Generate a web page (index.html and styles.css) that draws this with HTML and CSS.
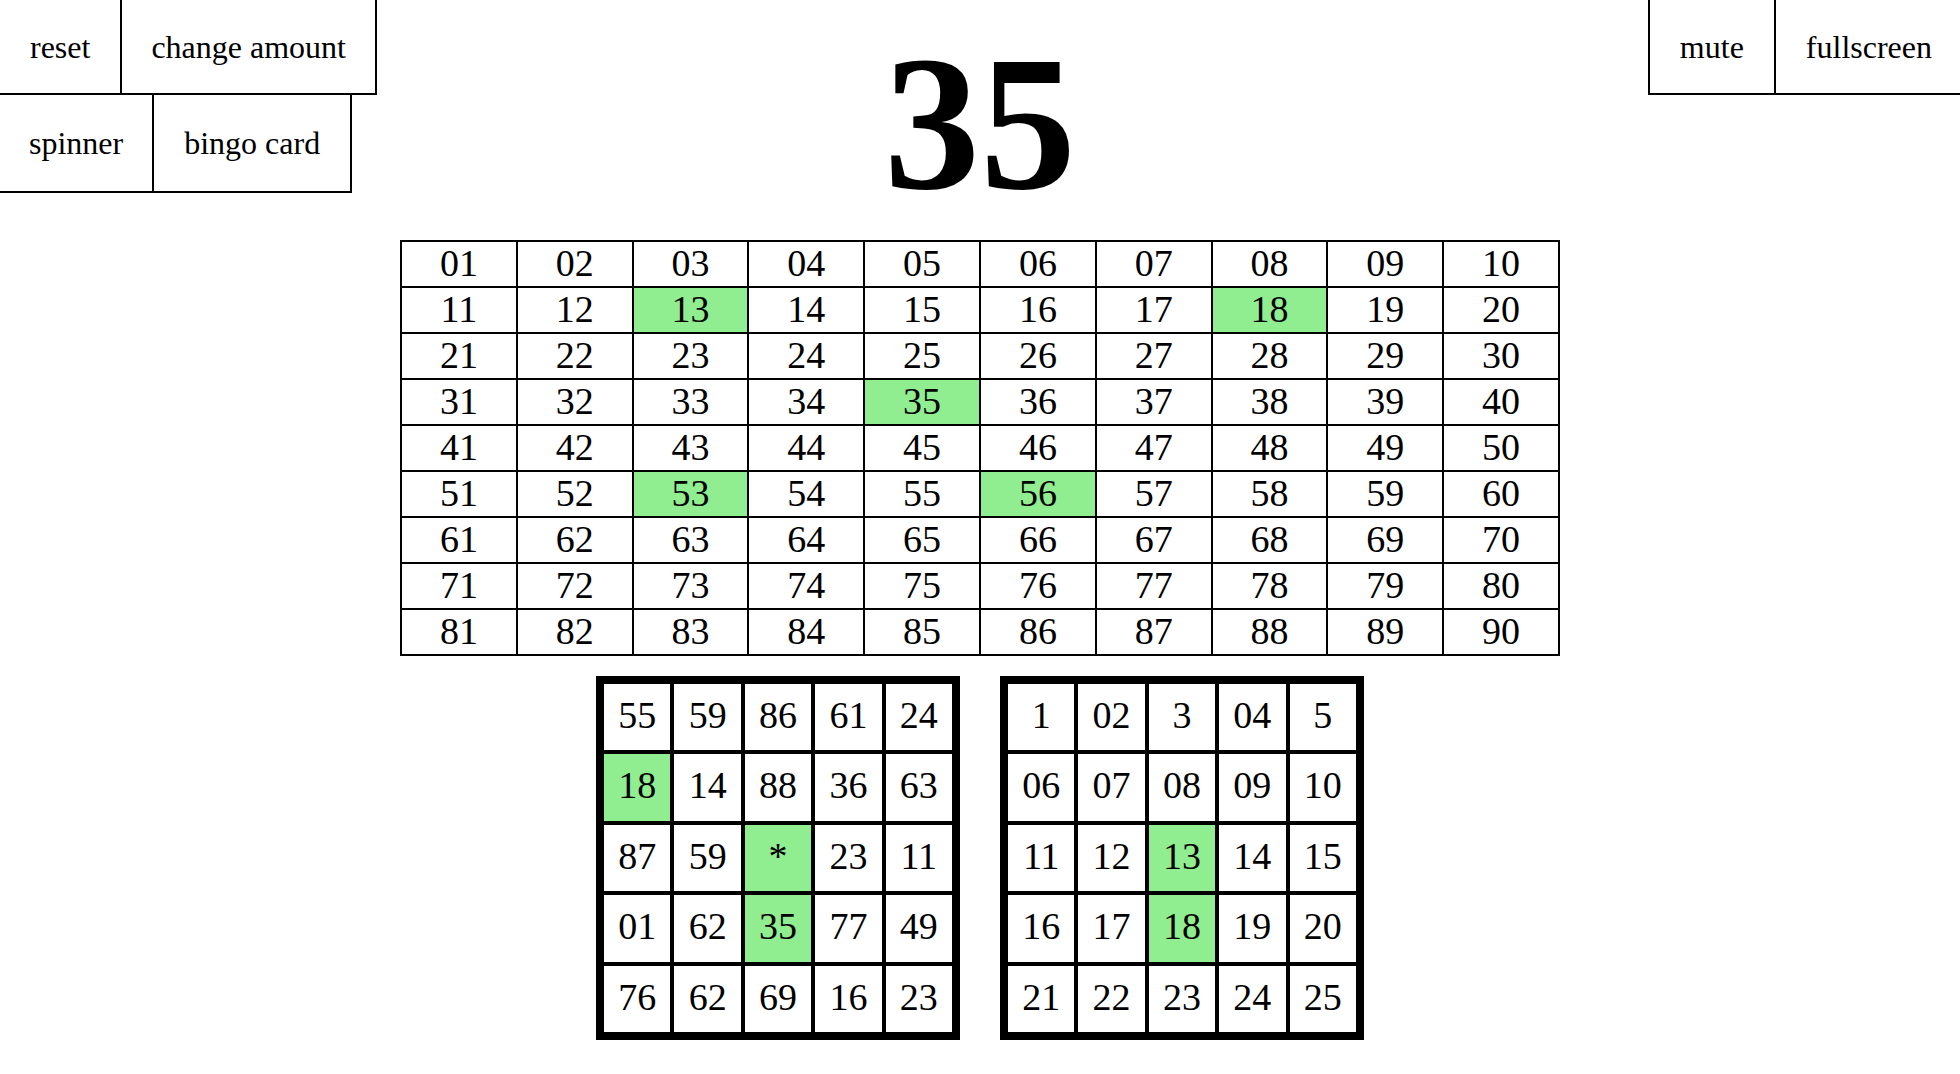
FILE: index.html
```html
<!DOCTYPE html>
<html lang="en">
<head>
<meta charset="utf-8">
<title>Bingo</title>
<link rel="stylesheet" href="styles.css">
</head>
<body>
<div class="controls controls-left">
  <div class="btn-row">
    <button class="btn btn-wide">reset</button>
    <button class="btn">change amount</button>
  </div>
  <div class="btn-row btn-row-second">
    <button class="btn">spinner</button>
    <button class="btn btn-wide">bingo card</button>
  </div>
</div>
<div class="controls controls-right">
  <div class="btn-row">
    <button class="btn">mute</button>
    <button class="btn btn-last">fullscreen</button>
  </div>
</div>
<main class="page">
  <div class="current">35</div>
  <table class="board">
    <tr><td>01</td><td>02</td><td>03</td><td>04</td><td>05</td><td>06</td><td>07</td><td>08</td><td>09</td><td>10</td></tr>
    <tr><td>11</td><td>12</td><td class="hit">13</td><td>14</td><td>15</td><td>16</td><td>17</td><td class="hit">18</td><td>19</td><td>20</td></tr>
    <tr><td>21</td><td>22</td><td>23</td><td>24</td><td>25</td><td>26</td><td>27</td><td>28</td><td>29</td><td>30</td></tr>
    <tr><td>31</td><td>32</td><td>33</td><td>34</td><td class="hit">35</td><td>36</td><td>37</td><td>38</td><td>39</td><td>40</td></tr>
    <tr><td>41</td><td>42</td><td>43</td><td>44</td><td>45</td><td>46</td><td>47</td><td>48</td><td>49</td><td>50</td></tr>
    <tr><td>51</td><td>52</td><td class="hit">53</td><td>54</td><td>55</td><td class="hit">56</td><td>57</td><td>58</td><td>59</td><td>60</td></tr>
    <tr><td>61</td><td>62</td><td>63</td><td>64</td><td>65</td><td>66</td><td>67</td><td>68</td><td>69</td><td>70</td></tr>
    <tr><td>71</td><td>72</td><td>73</td><td>74</td><td>75</td><td>76</td><td>77</td><td>78</td><td>79</td><td>80</td></tr>
    <tr><td>81</td><td>82</td><td>83</td><td>84</td><td>85</td><td>86</td><td>87</td><td>88</td><td>89</td><td>90</td></tr>
  </table>
  <div class="cards">
    <div class="card">
      <div class="cell">55</div><div class="cell">59</div><div class="cell">86</div><div class="cell">61</div><div class="cell">24</div>
      <div class="cell hit">18</div><div class="cell">14</div><div class="cell">88</div><div class="cell">36</div><div class="cell">63</div>
      <div class="cell">87</div><div class="cell">59</div><div class="cell hit">*</div><div class="cell">23</div><div class="cell">11</div>
      <div class="cell">01</div><div class="cell">62</div><div class="cell hit">35</div><div class="cell">77</div><div class="cell">49</div>
      <div class="cell">76</div><div class="cell">62</div><div class="cell">69</div><div class="cell">16</div><div class="cell">23</div>
    </div>
    <div class="card">
      <div class="cell">1</div><div class="cell">02</div><div class="cell">3</div><div class="cell">04</div><div class="cell">5</div>
      <div class="cell">06</div><div class="cell">07</div><div class="cell">08</div><div class="cell">09</div><div class="cell">10</div>
      <div class="cell">11</div><div class="cell">12</div><div class="cell hit">13</div><div class="cell">14</div><div class="cell">15</div>
      <div class="cell">16</div><div class="cell">17</div><div class="cell hit">18</div><div class="cell">19</div><div class="cell">20</div>
      <div class="cell">21</div><div class="cell">22</div><div class="cell">23</div><div class="cell">24</div><div class="cell">25</div>
    </div>
  </div>
</main>
</body>
</html>
```
FILE: styles.css
```css
html, body {
  margin: 0;
  padding: 0;
  background: #ffffff;
  color: #000000;
  font-family: "Liberation Serif", "Times New Roman", serif;
}

.controls {
  position: absolute;
  top: 0;
  display: flex;
  flex-direction: column;
  align-items: flex-start;
}

.controls-left {
  left: 0;
}

.controls-right {
  right: 0;
  align-items: flex-end;
}

.btn-row {
  display: flex;
}

.btn {
  font-family: "Liberation Serif", "Times New Roman", serif;
  font-size: 32px;
  line-height: normal;
  color: #000;
  background: #fff;
  margin: 0;
  padding: 29px 29px 27px;
  border: 0;
  border-bottom: 2px solid #000;
  border-radius: 0;
  cursor: pointer;
}

.controls-left .btn {
  border-right: 2px solid #000;
}

.controls-right .btn {
  border-left: 2px solid #000;
  padding-left: 30px;
  padding-right: 30px;
}

.controls-right .btn-last {
  padding-right: 28px;
}

.btn-row-second .btn {
  padding-top: 30px;
  padding-bottom: 29px;
}

.controls-left .btn-wide {
  padding-left: 30px;
  padding-right: 30px;
}

.page {
  display: flex;
  flex-direction: column;
  align-items: center;
}

.current {
  font-size: 192px;
  font-weight: bold;
  line-height: normal;
  padding-top: 13px;
  margin-bottom: 6px;
  text-align: center;
}

.board {
  border-collapse: collapse;
  width: 1160px;
  table-layout: fixed;
}

.board td {
  border: 2px solid #000;
  padding: 0 0 1px;
  height: 43px;
  line-height: 43px;
  font-size: 38px;
  text-align: center;
}

.board td.hit {
  background: #90ee90;
}

.cards {
  display: flex;
  gap: 40px;
  margin-top: 20px;
}

.card {
  display: grid;
  grid-template-columns: repeat(5, 66.4px);
  grid-template-rows: repeat(5, 66.4px);
  gap: 4px;
  border: 8px solid #000;
  background: #000;
}

.cell {
  background: #fff;
  font-size: 38px;
  line-height: 44px;
  padding-top: 9px;
  box-sizing: border-box;
  text-align: center;
}

.cell.hit {
  background: #90ee90;
}
```
